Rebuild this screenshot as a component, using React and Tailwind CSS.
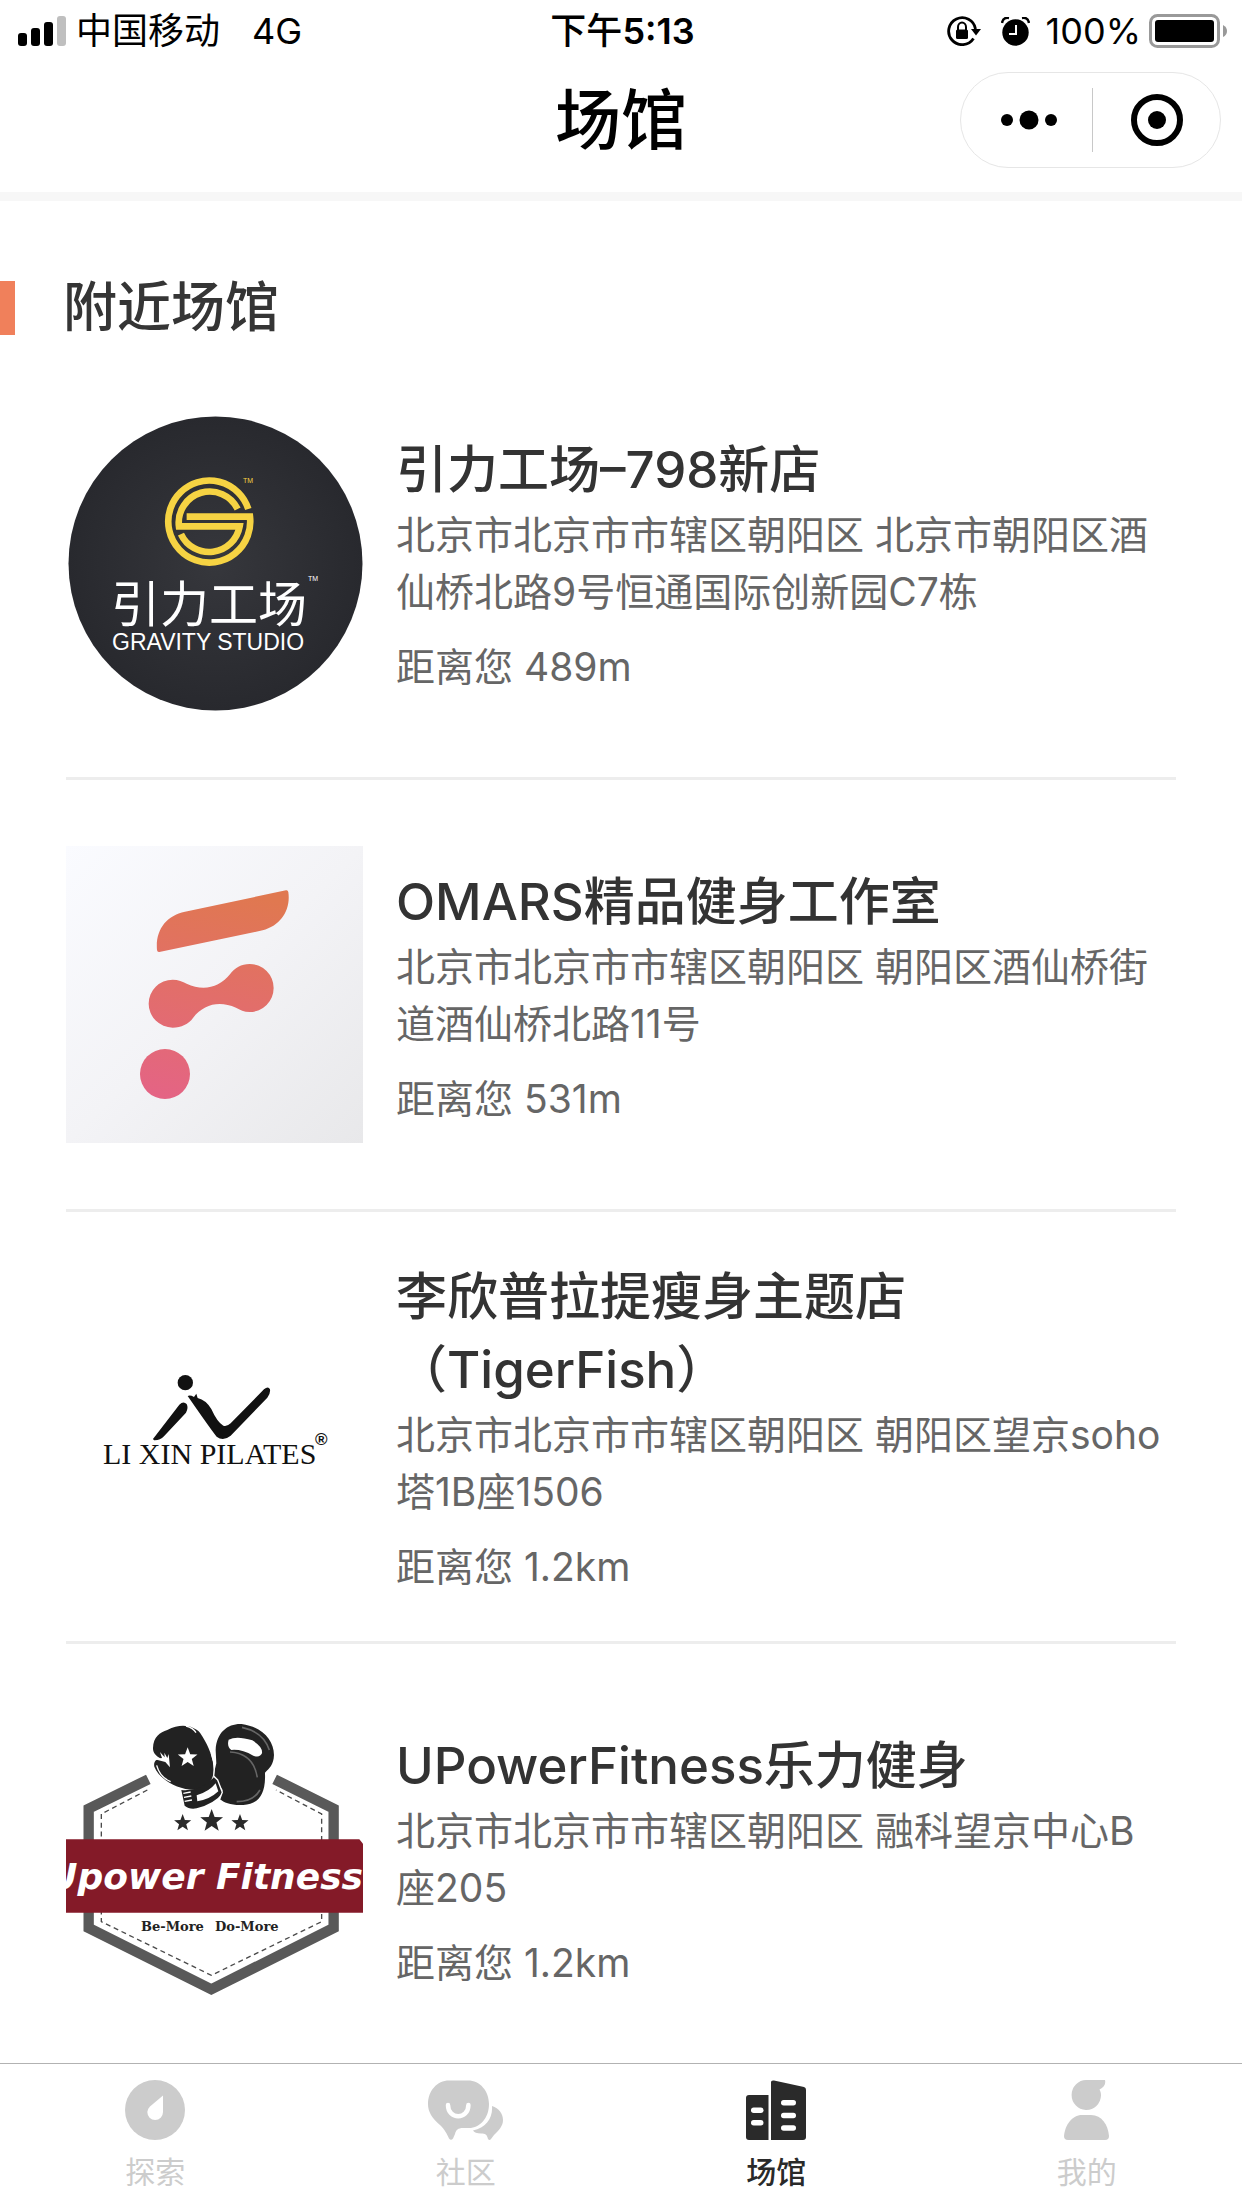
import clsx from "clsx";

const starPoints = (cx, cy, r) =>
  Array.from({ length: 10 }, (_, i) => {
    const a = (Math.PI / 5) * i - Math.PI / 2;
    const d = i % 2 ? r * 0.42 : r;
    return `${(cx + d * Math.cos(a)).toFixed(1)},${(cy + d * Math.sin(a)).toFixed(1)}`;
  }).join(" ");

function GravityLogo() {
  return (
    <svg viewBox="0 0 297 297" className="w-full h-full" role="img" aria-label="引力工场">
      <defs>
        <radialGradient id="gravityBg">
          <stop offset="0" stopColor="#36373c" />
          <stop offset="1" stopColor="#28292e" />
        </radialGradient>
      </defs>
      <circle cx="149.500" cy="149.500" r="147" fill="url(#gravityBg)" />
      <g transform="translate(143.300 107.700) scale(.3333)" fill="none" stroke="#f6d343" strokeWidth="20">
        <path d="M117 -38A123 123 0 1 0 122 -15H-68" />
        <path d="M85 -38A93 93 0 0 0 -91 14H91A93 93 0 0 1 -85 37" />
      </g>
      <text x="177" y="69" fontSize="7" fill="#f6d343" className="font-['Liberation_Sans']">TM</text>
      <text x="242" y="167" fontSize="7" fill="#fff" className="font-['Liberation_Sans']">TM</text>
      <text x="45" y="208" fontSize="49" fill="#fff" className="font-['Noto_Sans_CJK_SC']">引力工场</text>
      <text x="46" y="236" fontSize="23" fill="#fff" className="font-['Liberation_Sans']">GRAVITY STUDIO</text>
    </svg>
  );
}

function OmarsLogo() {
  return (
    <svg viewBox="0 0 297 297" className="w-full h-full" role="img" aria-label="OMARS">
      <defs>
        <linearGradient id="omarsBg" x1="0" y1="0" x2="1" y2="1">
          <stop offset="0" stopColor="#fafbff" />
          <stop offset=".5" stopColor="#f3f3f6" />
          <stop offset="1" stopColor="#e8e8ea" />
        </linearGradient>
        <linearGradient id="omarsMark" gradientUnits="userSpaceOnUse" x1="560" y1="210" x2="420" y2="840">
          <stop offset="0" stopColor="#e07850" />
          <stop offset="1" stopColor="#e46484" />
        </linearGradient>
      </defs>
      <path d="M0 0H297V297H0Z" fill="url(#omarsBg)" />
      <g transform="translate(-26 -26) scale(.3333)" fill="url(#omarsMark)">
        <path d="M358 396Q352 397 351 390C346 330 378 287 435 275L738 211Q744 210 745 216C753 270 722 318 668 331Z" />
        <path d="M398 479C415 479 428 485 440 491C488 514 538 504 570 463C584 444 604 432 629 432A72 72 0 0 1 629 576C612 576 600 569 588 563C538 542 492 552 459 594C446 612 424 623 398 623A72 72 0 0 1 398 479Z" />
        <circle cx="375" cy="762" r="75" />
      </g>
    </svg>
  );
}

function LiXinLogo() {
  return (
    <svg viewBox="0 0 297 297" className="w-full h-full" role="img" aria-label="LI XIN PILATES">
      <g transform="translate(-6 62) scale(.3333)" fill="#111">
        <circle cx="376" cy="128" r="23" />
        <path d="M279 297L358 194Q370 182 380 192Q386 203 378 218L312 289Q300 302 282 301Z" />
        <path d="M383 168Q390 164 402 171L409 161L413 174Q438 180 454 207Q472 247 490 257Q500 261 512 250L612 148Q625 137 630 148Q632 160 622 173L512 287Q490 305 470 290Q455 272 383 168Z" />
      </g>
      <text x="37" y="186" fontSize="30" fill="#111" className="font-['Liberation_Serif']">LI XIN PILATES</text>
      <text x="249" y="167" fontSize="17" fill="#111" className="font-['Liberation_Sans'] font-bold">®</text>
    </svg>
  );
}

function UpowerLogo() {
  return (
    <svg viewBox="0 0 297 297" className="w-full h-full" role="img" aria-label="Upower Fitness">
      <g transform="translate(-16 -10) scale(.3333)">
        <path d="M295 238L116 326V684L484 868L851 684V326L674 238" fill="none" stroke="#595959" strokeWidth="31" />
        <path
          d="M292 270L154 342V665L484 826L815 665V342L678 270"
          fill="none"
          stroke="#4a4a4a"
          strokeWidth="4"
          strokeDasharray="15 11"
        />
        <g fill="#222">
          <path d="M497 150C500 95 535 70 575 72C635 80 672 120 672 165C671 195 658 205 645 218C648 285 625 312 580 315C545 317 522 308 510 298L518 270L490 228L499 190Z" />
          <path d="M309 145C310 110 330 97 352 90C395 68 430 78 450 98C472 130 484 160 492 195C494 240 475 262 440 269C385 272 330 240 313 200C310 185 318 175 334 177C318 168 309 160 309 145Z" />
          <path d="M394 270Q455 275 491 232L503 242L518 278Q495 310 440 325Q418 329 404 317Z" />
        </g>
        <path d="M536 119Q560 106 607 121Q639 140 636 160Q630 174 610 167Q575 147 544 150Q530 140 536 119Z" fill="#fff" />
        <path d="M440 286Q478 275 497 250L505 274Q480 298 442 304Z" fill="#fff" />
        <path d="M314 178L336 174L330 156L344 172L343 158L352 174L356 162L360 202L346 186Z" fill="#fff" />
        <path
          d="M408 78Q430 84 438 98M320 196Q330 232 362 245M400 280L422 276M402 292L424 288M404 304L426 300M484 160Q496 195 491 228L503 240L517 277L508 300"
          fill="none"
          stroke="#fff"
          strokeWidth="4"
        />
        <path d="M540 156Q610 160 622 232M576 82Q640 96 658 150M560 305Q610 305 630 270" fill="none" stroke="#666" strokeWidth="5" />
        <polygon points={starPoints(413, 173, 31)} fill="#fff" />
        <g fill="#2a2a2a">
          <polygon points={starPoints(398, 369, 27)} />
          <polygon points={starPoints(485, 363, 36)} />
          <polygon points={starPoints(570, 369, 27)} />
        </g>
        <path d="M48 418H928L940 432V638H48Z" fill="#841a28" />
      </g>
      <text x="297" y="179" fontSize="36" textAnchor="end" fill="#fff" className="font-['DejaVu_Sans'] font-bold italic">
        Upower Fitness
      </text>
      <text x="75" y="221" fontSize="13" fill="#222" className="font-['DejaVu_Serif'] font-bold">Be-More</text>
      <text x="149" y="221" fontSize="13" fill="#222" className="font-['DejaVu_Serif'] font-bold">Do-More</text>
    </svg>
  );
}

function ExploreIcon() {
  return (
    <svg viewBox="0 0 60 60" className="w-[60px] h-[60px]" fill="currentColor">
      <circle cx="30" cy="30" r="30" />
      <path d="M38 15.500V32A7.800 8 0 0 1 22.300 32Q22.500 29 25 26.500Z" fill="#fff" />
    </svg>
  );
}

function CommunityIcon() {
  return (
    <svg viewBox="0 0 75 60" className="w-[75px] h-[60px]" fill="currentColor">
      <path d="M21 .5H40C52 .5 61 11 61 24C61 38 52 48 41 48H35C30 48 28 50 27 54L25 58.500Q23 61 21 58.500C19 54 17 50 12 45C4 38 0 32 0 24C0 11 9 .5 21 .5Z" />
      <path d="M64 26C71 28 75 34 75 40C75 46 71 50 66 55L63 59Q61.500 61 60 59C58.500 54 57.500 53.500 53 53.500C49 53.500 46 52.500 45 50.500C58 48 65 38 64 26Z" />
      <path d="M20 25C20 40 40.400 40 40.400 25" fill="none" stroke="#fff" strokeWidth="4.500" strokeLinecap="round" />
    </svg>
  );
}

function VenueIcon() {
  return (
    <svg viewBox="0 0 60 60" className="w-[60px] h-[60px]" fill="currentColor">
      <path d="M3 15H22.500V60H3Q0 60 0 57V18Q0 15 3 15Z" />
      <path d="M25 2Q25 0 28 .5L58 7Q60 7.500 60 9.500V57Q60 60 57 60H25Z" />
      <g fill="#fff">
        <rect x="5" y="27.500" width="12.500" height="5.500" rx="2.700" />
        <rect x="5" y="40" width="12.500" height="5.500" rx="2.700" />
        <rect x="35" y="20" width="15" height="5.500" rx="2.700" />
        <rect x="35" y="32.700" width="15" height="5.500" rx="2.700" />
        <rect x="35" y="45.200" width="15" height="5.500" rx="2.700" />
      </g>
    </svg>
  );
}

function MineIcon() {
  return (
    <svg viewBox="0 0 45 60" className="w-[45px] h-[60px]" fill="currentColor">
      <path d="M22.500 0H41C42 4 40 7.500 35.500 9.500C36.500 11.500 37 13 37 15.500A14.700 15 0 1 1 22.500 0Z" />
      <path d="M18 35H27C38 35 44 45 45 56Q45 60 41 60H4Q0 60 0 56C1 45 8 35 18 35Z" />
    </svg>
  );
}

const venues = [
  {
    name: "引力工场–798新店",
    address: "北京市北京市市辖区朝阳区 北京市朝阳区酒仙桥北路9号恒通国际创新园C7栋",
    distance: "489m",
    Logo: GravityLogo,
  },
  {
    name: "OMARS精品健身工作室",
    address: "北京市北京市市辖区朝阳区 朝阳区酒仙桥街道酒仙桥北路11号",
    distance: "531m",
    Logo: OmarsLogo,
  },
  {
    name: "李欣普拉提瘦身主题店（TigerFish）",
    address: "北京市北京市市辖区朝阳区 朝阳区望京soho塔1B座1506",
    distance: "1.2km",
    Logo: LiXinLogo,
  },
  {
    name: "UPowerFitness乐力健身",
    address: "北京市北京市市辖区朝阳区 融科望京中心B座205",
    distance: "1.2km",
    Logo: UpowerLogo,
  },
];

const tabs = [
  { label: "探索", Icon: ExploreIcon },
  { label: "社区", Icon: CommunityIcon },
  { label: "场馆", Icon: VenueIcon, active: true },
  { label: "我的", Icon: MineIcon },
];

function StatusBar() {
  return (
    <div className="grid grid-cols-3 items-center h-[62px] pl-[18px] pr-[15px] text-[36px] leading-[48px]">
      <div className="flex items-center">
        <svg viewBox="0 0 48 30" className="w-12 h-[30px] mr-[10px]">
          <rect x="0" y="17" width="9" height="13" rx="3" />
          <rect x="13" y="12" width="9" height="18" rx="3" />
          <rect x="26" y="6" width="9" height="24" rx="3" />
          <rect x="39" y="0" width="9" height="30" rx="3" fill="#bfbfbf" />
        </svg>
        <span className="mr-8">中国移动</span>
        <span>4G</span>
      </div>
      <div className="text-center font-medium">
        下午<span className="font-semibold">5:13</span>
      </div>
      <div className="flex items-center justify-end">
        <svg viewBox="0 0 34 30" className="w-[34px] h-[30px] mr-5">
          <path d="M26.500 22.500A13.500 13.500 0 1 1 28.500 13" fill="none" stroke="#000" strokeWidth="2.800" />
          <path d="M24 13H34L29 19.500Z" />
          <rect x="9" y="13.500" width="12" height="9.500" rx="1.500" />
          <path d="M11 14V11A4 4.500 0 0 1 19 11V14" fill="none" stroke="#000" strokeWidth="2" />
        </svg>
        <svg viewBox="0 0 29 29" className="w-[29px] h-[29px] mr-4">
          <circle cx="14.500" cy="15.500" r="13.200" />
          <path d="M1 6Q2 0 8 1M28 6Q27 0 21 1" fill="none" stroke="#000" strokeWidth="2.500" />
          <path d="M15 8V17H8" fill="none" stroke="#fff" strokeWidth="2" />
        </svg>
        <span className="mr-2">100%</span>
        <svg viewBox="0 0 78 34" className="w-[78px] h-[34px]">
          <rect x="1.500" y="1.500" width="68" height="31" rx="7" fill="none" stroke="#999" strokeWidth="3" />
          <rect x="6" y="6" width="59" height="22" rx="3" />
          <path d="M74 11Q78 13 78 17T74 23Z" fill="#999" />
        </svg>
      </div>
    </div>
  );
}

function NavBar() {
  return (
    <div className="grid grid-cols-[1fr_auto_1fr] items-center h-[116px] px-[21px]">
      <h1 className="col-start-2 text-[66px] leading-[80px] font-medium">场馆</h1>
      <div className="justify-self-end flex items-center w-[261px] h-24 border border-[#e6e6e6] rounded-full">
        <button type="button" aria-label="更多" className="flex-1 flex justify-center pl-1">
          <svg viewBox="0 0 56 20" className="w-14 h-5">
            <circle cx="6" cy="10" r="6" />
            <circle cx="28" cy="10" r="9.500" />
            <circle cx="50" cy="10" r="6" />
          </svg>
        </button>
        <span className="w-px h-16 bg-[#c8c8c8]" />
        <button type="button" aria-label="关闭" className="flex-1 flex justify-center">
          <svg viewBox="0 0 52 52" className="w-[52px] h-[52px]">
            <circle cx="26" cy="26" r="23" fill="none" stroke="#000" strokeWidth="6" />
            <circle cx="26" cy="26" r="9" />
          </svg>
        </button>
      </div>
    </div>
  );
}

function VenueItem({ name, address, distance, Logo }) {
  return (
    <li className="flex items-center gap-[33px] h-[432px] border-b-3 border-[#ededed]">
      <div className="shrink-0 w-[297px] h-[297px]">
        <Logo />
      </div>
      <div className="flex-1 min-w-0 pt-[2px] pr-3">
        <h3 className="text-[51px] leading-[73px] font-medium text-[#333]">{name}</h3>
        <p className="text-[39px] leading-[57px] text-[#666]">{address}</p>
        <p className="mt-[18px] text-[39px] leading-[57px] text-[#666]">距离您 {distance}</p>
      </div>
    </li>
  );
}

export default function App() {
  return (
    <div className="flex flex-col h-screen bg-white text-black font-['Inter','Noto_Sans_CJK_SC',sans-serif]">
      <header className="shrink-0 pb-[14px] border-b-9 border-[#f7f7f7]">
        <StatusBar />
        <NavBar />
      </header>

      <main className="flex-1 min-h-0 overflow-y-auto [scrollbar-width:none]">
        <div className="flex items-center mt-20 mb-[13px]">
          <span className="w-[15px] h-[54px] bg-[#f0805b]" />
          <h2 className="ml-12 text-[54px] leading-[54px] font-medium text-[#353535]">附近场馆</h2>
        </div>
        <ul className="px-[66px]">
          {venues.map((v) => (
            <VenueItem key={v.name} {...v} />
          ))}
        </ul>
      </main>

      <nav className="shrink-0 grid grid-cols-4 pt-4 pb-4 border-t border-[#b2b2b2] bg-white">
        {tabs.map(({ label, Icon, active }) => (
          <a
            key={label}
            href="#"
            className={clsx("flex flex-col items-center gap-3", active ? "text-[#2a2a2a]" : "text-[#cccccc]")}
          >
            <Icon />
            <span className={clsx("text-[30px] leading-[40px]", active && "font-medium")}>{label}</span>
          </a>
        ))}
      </nav>
    </div>
  );
}
